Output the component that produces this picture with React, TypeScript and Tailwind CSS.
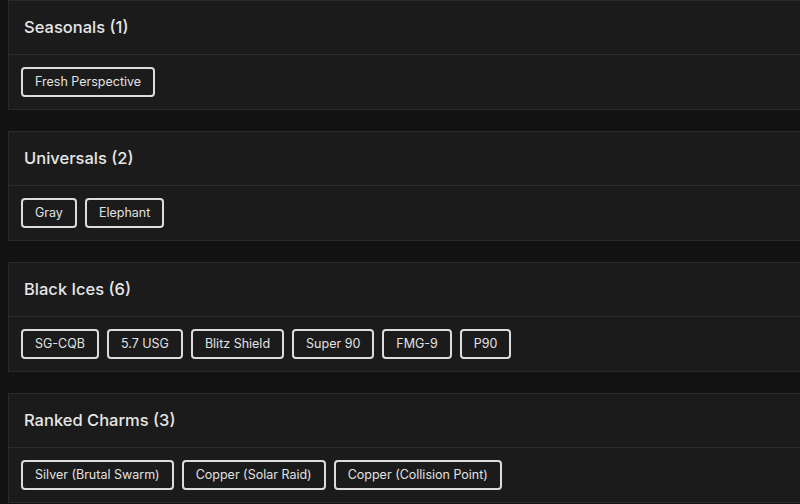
import React from "react";

const sections: { title: string; items: string[] }[] = [
  { title: "Seasonals (1)", items: ["Fresh Perspective"] },
  { title: "Universals (2)", items: ["Gray", "Elephant"] },
  { title: "Black Ices (6)", items: ["SG-CQB", "5.7 USG", "Blitz Shield", "Super 90", "FMG-9", "P90"] },
  { title: "Ranked Charms (3)", items: ["Silver (Brutal Swarm)", "Copper (Solar Raid)", "Copper (Collision Point)"] },
];

export default function App() {
  return (
    <div className="w-[800px] h-[504px] overflow-hidden bg-[#121212] pl-2" style={{ fontFamily: "Inter, 'Open Sans', sans-serif" }}>
      <div className="flex flex-col gap-[21px] w-[800px]">
        {sections.map((s) => (
          <div key={s.title} className="bg-[#1b1b1b] border border-[#2a2a2a]">
            <div className="h-[54px] flex items-center pl-[15px] border-b border-[#2b2b2b]">
              <span className="text-[16.5px] font-medium text-[#e6e6e6]">{s.title}</span>
            </div>
            <div className="h-[54px] flex items-center gap-2 pl-3">
              {s.items.map((it) => (
                <div key={it} className="h-[30px] px-[12px] flex items-center border-2 border-[#dcdcdc] rounded-[4px] text-[12.5px] text-[#e2e2e2]">
                  {it}
                </div>
              ))}
            </div>
          </div>
        ))}
      </div>
    </div>
  );
}
